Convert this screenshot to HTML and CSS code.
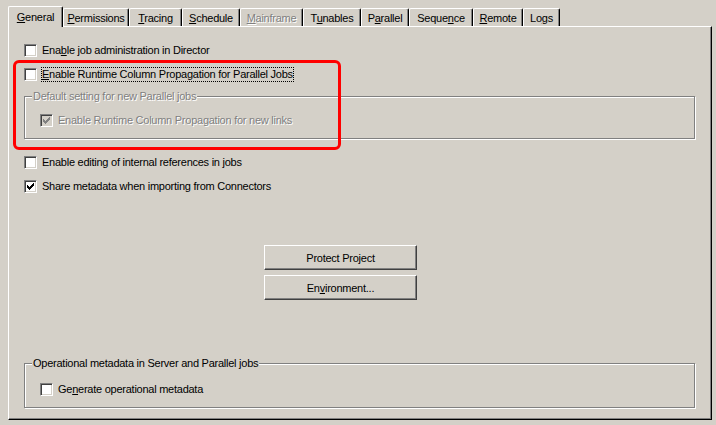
FILE: index.html
```html
<!DOCTYPE html>
<html>
<head>
<meta charset="utf-8">
<title>Project Properties</title>
<link rel="stylesheet" href="styles.css">
</head>
<body>
<div class="dialog">
  <div class="tabs">
    <div class="tab tab-sel w-general"><u>G</u>eneral</div>
    <div class="tab w-perm"><u>P</u>ermissions</div>
    <div class="tab w-trace"><u>T</u>racing</div>
    <div class="tab w-sched"><u>S</u>chedule</div>
    <div class="tab tab-dis w-main"><u>M</u>ainframe</div>
    <div class="tab w-tun">T<u>u</u>nables</div>
    <div class="tab w-par">P<u>a</u>rallel</div>
    <div class="tab w-seq">Seque<u>n</u>ce</div>
    <div class="tab w-rem"><u>R</u>emote</div>
    <div class="tab w-logs">Lo<u>g</u>s</div>
  </div>
  <div class="panel">
    <div class="row r1"><span class="cb"></span><span class="lbl">Ena<u>b</u>le job administration in Director</span></div>
    <div class="row r2"><span class="cb"></span><span class="lbl focus"><u>E</u>nable Runtime Column Propagation for Parallel Jobs</span></div>
    <fieldset class="grp grp1">
      <legend class="dis">Default setting for new Parallel jobs</legend>
      <div class="row"><span class="cb cb-dis"><svg class="ck" width="7" height="7" viewBox="0 0 7 7"><path d="M0 2h1v3H0zM1 3h1v3H1zM2 4h1v3H2zM3 3h1v3H3zM4 2h1v3H4zM5 1h1v3H5zM6 0h1v3H6z"/></svg></span><span class="lbl dis">Enable Runtime Column Propagation for new links</span></div>
    </fieldset>
    <div class="row r3"><span class="cb"></span><span class="lbl">Enable editing of internal references in jobs</span></div>
    <div class="row r4"><span class="cb"><svg class="ck" width="7" height="7" viewBox="0 0 7 7"><path d="M0 2h1v3H0zM1 3h1v3H1zM2 4h1v3H2zM3 3h1v3H3zM4 2h1v3H4zM5 1h1v3H5zM6 0h1v3H6z"/></svg></span><span class="lbl">Share metadata when importing from Connectors</span></div>
    <div class="btns">
      <button class="btn">Protect Project</button>
      <button class="btn">En<u>v</u>ironment...</button>
    </div>
    <fieldset class="grp grp2">
      <legend>Operational metadata in Server and Parallel jobs</legend>
      <div class="row"><span class="cb"></span><span class="lbl">Ge<u>n</u>erate operational metadata</span></div>
    </fieldset>
  </div>
  <div class="annot"></div>
</div>
</body>
</html>
```
FILE: styles.css
```css
* { box-sizing: border-box; }
html, body { margin: 0; padding: 0; }
body {
  background: #d4d0c8;
  font-family: "Liberation Sans", Arial, sans-serif;
  font-size: 11px;
  letter-spacing: -0.25px;
  color: #000;
  width: 716px;
  height: 425px;
  overflow: hidden;
}
.dialog { position: relative; padding-left: 8px; }

/* tabs */
.tabs { display: flex; align-items: flex-end; height: 26px; }
.tab {
  height: 18px;
  border-top: 1px solid #fff;
  border-left: 1px solid #fff;
  border-right: 1px solid #000;
  border-radius: 2px 2px 0 0;
  box-shadow: inset -1px 0 0 #808080;
  text-align: center;
  line-height: 13px;
  padding-top: 3px;
  white-space: nowrap;
}
.tab-sel {
  position: relative;
  z-index: 1;
  height: 21px;
  margin-bottom: -1px;
  background: #d4d0c8;
  padding-top: 4px;
}
.tab-dis, .dis { color: #808080; text-shadow: 1px 1px 0 #fff; }
.w-general { width: 55px; }
.w-perm { width: 66px; }
.w-trace { width: 53px; }
.w-sched { width: 58px; }
.w-main { width: 63px; }
.w-tun { width: 58px; }
.w-par { width: 48px; }
.w-seq { width: 64px; }
.w-rem { width: 50px; }
.w-logs { width: 37px; }

/* panel */
.panel {
  width: 704px;
  height: 394px;
  border: 1px solid;
  border-color: #fff #000 #000 #fff;
  box-shadow: inset -1px -1px 0 #808080;
  padding: 0 0 0 15px;
}
.row { display: flex; align-items: center; height: 13px; }
.r1 { margin-top: 17px; }
.r2 { margin-top: 11px; }
.r3 { margin-top: 17px; }
.r4 { margin-top: 11px; }

.cb {
  flex: none;
  width: 13px;
  height: 13px;
  background: #fff;
  border: 1px solid;
  border-color: #808080 #fff #fff #808080;
  box-shadow: inset 1px 1px 0 #404040, inset -1px -1px 0 #d4d0c8;
  display: flex;
  align-items: center;
  justify-content: center;
  color: #000;
}
.cb-dis { background: #d4d0c8; color: #808080; }
.ck { display: block; fill: currentColor; shape-rendering: crispEdges; }
.lbl { margin-left: 5px; line-height: 13px; white-space: nowrap; }
.focus { margin-left: 4px; border: 1px dotted #000; }

/* group boxes */
.grp {
  margin: 0;
  min-width: 0;
  width: 671px;
  border: 1px solid #808080;
  box-shadow: 1px 1px 0 #fff, inset 1px 1px 0 #fff;
  padding: 0 0 11px 7px;
}
.grp legend {
  margin: 0;
  padding: 0 1px;
  line-height: 13px;
  background: #d4d0c8;
}
.grp .row { margin-left: 8px; }
.grp1 { margin-top: 9px; }
.grp1 .row { margin-top: 11px; }
.grp2 { margin-top: 57px; }
.grp2 .row { margin-top: 13px; }

/* buttons */
.btns {
  display: flex;
  flex-direction: column;
  gap: 5px;
  margin-top: 52px;
  margin-left: 240px;
}
.btn {
  width: 153px;
  height: 25px;
  padding: 0;
  font: inherit;
  letter-spacing: inherit;
  color: #000;
  background: #d4d0c8;
  border: 1px solid;
  border-color: #fff #404040 #404040 #fff;
  box-shadow: inset -1px -1px 0 #808080;
  border-radius: 0;
}

/* red annotation */
.annot {
  position: absolute;
  left: 13px;
  top: 60px;
  width: 328px;
  height: 90px;
  border: 3px solid #f00;
  border-radius: 6px;
}
```
